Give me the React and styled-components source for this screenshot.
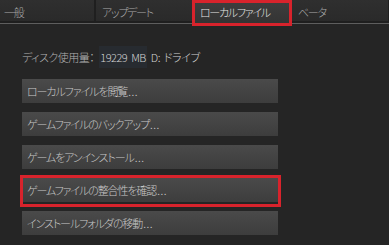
import styled, { createGlobalStyle } from 'styled-components'

const GlobalStyle = createGlobalStyle`
  html, body {
    margin: 0;
    padding: 0;
    background: #252525;
  }
  body {
    font-family: "Noto Sans CJK JP", "Noto Sans", sans-serif;
    font-feature-settings: "palt";
  }
`

const tabs = ['一般', 'アップデート', 'ローカルファイル', 'ベータ']

const actions = [
    'ローカルファイルを閲覧',
    'ゲームファイルのバックアップ',
    'ゲームをアンインストール',
    'ゲームファイルの整合性を確認',
    'インストールフォルダの移動',
]

const App = () => {
    return (
        <Page>
            <GlobalStyle/>
            <TabBar>
                {tabs.map((t, i) =>
                    <Tab key={i} active={i === 2}>{t}</Tab>
                )}
            </TabBar>
            <Content>
                <DiskInfo>
                    ディスク使用量：<Value><Num>19229 MB</Num> D: ドライブ</Value>
                </DiskInfo>
                <ButtonList>
                    {actions.map((a, i) =>
                        <ActionButton key={i} marked={i === 3}>
                            {a}<Dots>...</Dots>
                        </ActionButton>
                    )}
                </ButtonList>
            </Content>
        </Page>
    )
}

export default App

const Page = styled.div`
  width: 389px;
  height: 245px;
  overflow: hidden;
  background: #252525;
`

const TabBar = styled.div`
  display: flex;
  gap: 2px;
  margin-left: -2px;
  height: 21px;
  padding-bottom: 2px;
  background: #1f1f1f;
  border-bottom: 1px solid #5e5e5e;
`

const Tab = styled.div`
  position: relative;
  width: 96px;
  flex: none;
  box-sizing: border-box;
  padding: 4px 0 0 6px;
  height: ${props => props.active ? '23px' : '21px'};
  font-size: 11px;
  font-weight: 300;
  letter-spacing: -1.3px;
  line-height: 16px;
  color: ${props => props.active ? '#e6e6e6' : '#a8a8a8'};
  background: ${props => props.active
    ? 'linear-gradient(#3e3e3e, #343434)'
    : 'linear-gradient(#2f2f2f, #2a2a2a)'};

  ${props => props.active && `
    &::after {
      content: '';
      position: absolute;
      left: -2px;
      right: -2px;
      top: 0;
      bottom: -3px;
      border: 3px solid #d8232c;
    }
  `}
`

const Content = styled.div`
  padding: 26px 0 0 22px;
`

const DiskInfo = styled.div`
  font-size: 11px;
  font-weight: 300;
  letter-spacing: -0.5px;
  word-spacing: 2px;
  line-height: 14px;
  color: #b2b2b2;
`

const Value = styled.span`
  margin-left: 5px;
  color: #d2d2d2;
`

const Num = styled.span`
  background: #272b30;
  padding: 3px 1px;
`

const ButtonList = styled.div`
  display: flex;
  flex-direction: column;
  gap: 9px;
  margin-top: 15px;
`

const ActionButton = styled.div`
  position: relative;
  width: 256px;
  height: 24px;
  box-sizing: border-box;
  padding-left: 5px;
  display: flex;
  align-items: center;
  font-size: 11px;
  font-weight: 300;
  letter-spacing: -1.1px;
  color: #c8c8c8;
  background: linear-gradient(#4a4a4a, #3d3d3d);

  ${props => props.marked && `
    &::after {
      content: '';
      position: absolute;
      left: -2px;
      right: -3px;
      top: -3px;
      bottom: -5px;
      border: 3px solid #d8232c;
    }
  `}
`

const Dots = styled.span`
  letter-spacing: 0.5px;
  margin-left: 1px;
`
